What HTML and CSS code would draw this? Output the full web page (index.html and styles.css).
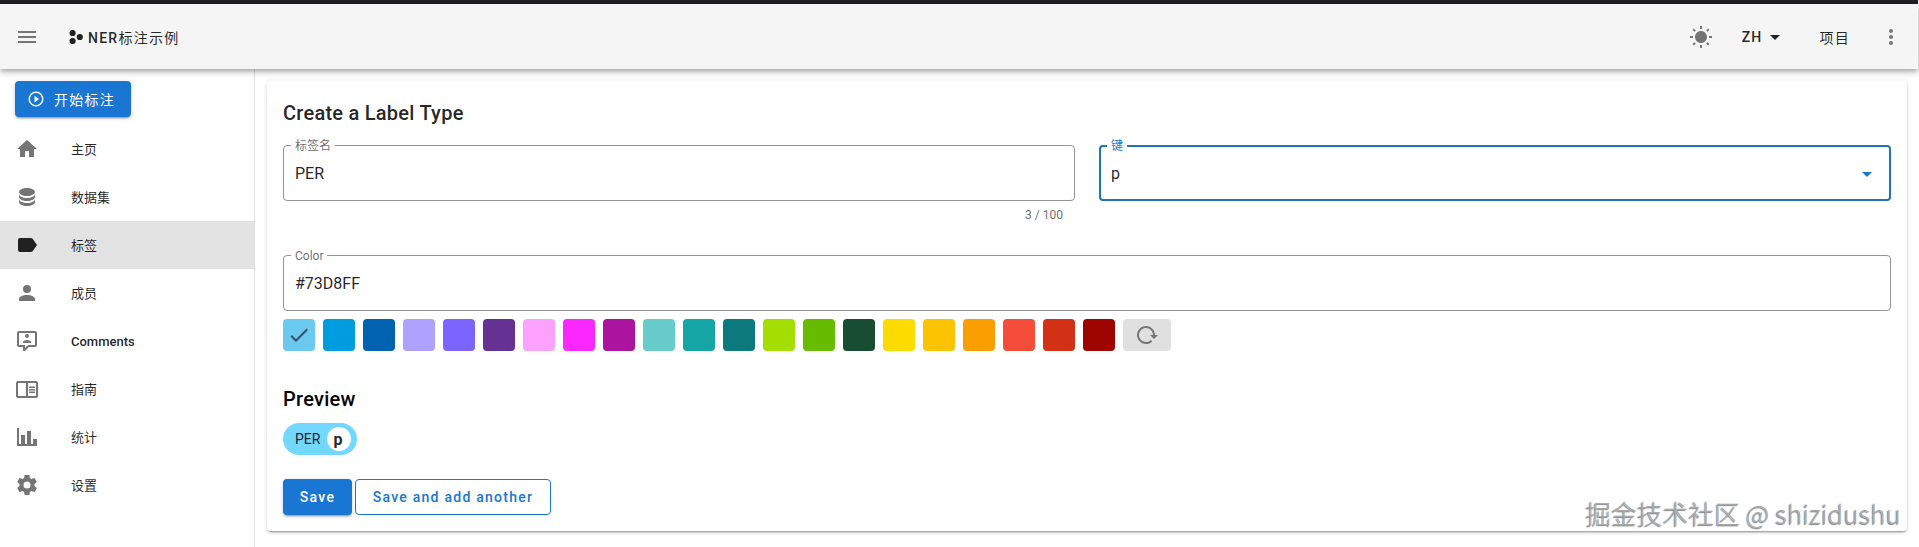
FILE: index.html
```html
<!DOCTYPE html>
<html lang="zh">
<head>
<meta charset="utf-8">
<title>NER标注示例</title>
<link rel="stylesheet" href="styles.css">
</head>
<body>
<div class="app">
  <div class="topstrip"></div>
  <header class="appbar">
    <svg class="icon" viewBox="0 0 24 24"><path d="M3,6H21V8H3V6M3,11H21V13H3V11M3,16H21V18H3V16Z"/></svg>
    <svg class="logo" viewBox="0 0 14 14"><circle cx="3.6" cy="3" r="3.1"/><circle cx="3.6" cy="11" r="3.1"/><circle cx="10.8" cy="7" r="3.1"/></svg>
    <span class="btn-text brand">NER<span class="cjk">标注示例</span></span>
    <svg class="icon sun" viewBox="0 0 24 24"><path d="M3.55 19.09L4.96 20.5L6.76 18.71L5.34 17.29M12 6C8.69 6 6 8.69 6 12S8.69 18 12 18 18 15.31 18 12C18 8.68 15.31 6 12 6M20 13H23V11H20M17.24 18.71L19.04 20.5L20.45 19.09L18.66 17.29M20.45 5L19.04 3.6L17.24 5.39L18.66 6.81M13 1H11V4H13M6.76 5.39L4.96 3.6L3.55 5L5.34 6.81L6.76 5.39M1 13H4V11H1M13 20H11V23H13Z"/></svg>
    <span class="btn-text lang">ZH</span>
    <svg class="icon dark" viewBox="0 0 24 24"><path d="M7,10L12,15L17,10H7Z"/></svg>
    <span class="btn-text projects cjk">项目</span>
    <svg class="icon dots" viewBox="0 0 24 24"><path d="M12,16A2,2 0 0,1 14,18A2,2 0 0,1 12,20A2,2 0 0,1 10,18A2,2 0 0,1 12,16M12,10A2,2 0 0,1 14,12A2,2 0 0,1 12,14A2,2 0 0,1 10,12A2,2 0 0,1 12,10M12,4A2,2 0 0,1 14,6A2,2 0 0,1 12,8A2,2 0 0,1 10,6A2,2 0 0,1 12,4Z"/></svg>
  </header>
  <div class="body">
    <nav class="sidebar">
      <button class="start">
        <svg class="start-icon" viewBox="0 0 24 24"><path d="M10,16.5L16,12L10,7.5V16.5M12,2A10,10 0 0,0 2,12A10,10 0 0,0 12,22A10,10 0 0,0 22,12A10,10 0 0,0 12,2M12,20C7.59,20 4,16.41 4,12C4,7.59 7.59,4 12,4C16.41,4 20,7.59 20,12C20,16.41 16.41,20 12,20Z"/></svg>
        <span class="cjk">开始标注</span>
      </button>
      <ul class="nav">
        <li class="nav-item"><svg class="icon" viewBox="0 0 24 24"><path d="M10,20V14H14V20H19V12H22L12,3L2,12H5V20H10Z"/></svg><span class="nav-cjk">主页</span></li>
        <li class="nav-item"><svg class="icon" viewBox="0 0 24 24"><path d="M12,3C7.58,3 4,4.79 4,7C4,9.21 7.58,11 12,11C16.42,11 20,9.21 20,7C20,4.79 16.42,3 12,3M4,9V12C4,14.21 7.58,16 12,16C16.42,16 20,14.21 20,12V9C20,11.21 16.42,13 12,13C7.58,13 4,11.21 4,9M4,14V17C4,19.21 7.58,21 12,21C16.42,21 20,19.21 20,17V14C20,16.21 16.42,18 12,18C7.58,18 4,16.21 4,14Z"/></svg><span class="nav-cjk">数据集</span></li>
        <li class="nav-item active"><svg class="icon" viewBox="0 0 24 24"><path d="M17.63,5.84C17.27,5.33 16.67,5 16,5H5A2,2 0 0,0 3,7V17A2,2 0 0,0 5,19H16C16.67,19 17.27,18.66 17.63,18.15L22,12L17.63,5.84Z"/></svg><span class="nav-cjk">标签</span></li>
        <li class="nav-item"><svg class="icon" viewBox="0 0 24 24"><path d="M12,4A4,4 0 0,1 16,8A4,4 0 0,1 12,12A4,4 0 0,1 8,8A4,4 0 0,1 12,4M12,14C16.42,14 20,15.79 20,18V20H4V18C4,15.79 7.58,14 12,14Z"/></svg><span class="nav-cjk">成员</span></li>
        <li class="nav-item"><svg class="icon" viewBox="0 0 24 24"><path d="M9,22A1,1 0 0,1 8,21V18H4A2,2 0 0,1 2,16V4C2,2.89 2.9,2 4,2H20A2,2 0 0,1 22,4V16A2,2 0 0,1 20,18H13.9L10.2,21.71C10,21.9 9.75,22 9.5,22V22H9M10,16V19.08L13.08,16H20V4H4V16H10M16,14H8V13C8,11.67 10.67,11 12,11C13.33,11 16,11.67 16,13V14M12,5A2,2 0 0,1 14,7A2,2 0 0,1 12,9A2,2 0 0,1 10,7A2,2 0 0,1 12,5Z"/></svg><span>Comments</span></li>
        <li class="nav-item"><svg class="icon" viewBox="0 0 24 24"><path d="M21,4H3A2,2 0 0,0 1,6V19A2,2 0 0,0 3,21H21A2,2 0 0,0 23,19V6A2,2 0 0,0 21,4M3,19V6H11V19H3M21,19H13V6H21V19M14,9.5H20V11H14V9.5M14,12H20V13.5H14V12M14,14.5H20V16H14V14.5Z"/></svg><span class="nav-cjk">指南</span></li>
        <li class="nav-item"><svg class="icon" viewBox="0 0 24 24"><path d="M22,21H2V3H4V19H6V10H10V19H12V6H16V19H18V14H22V21Z"/></svg><span class="nav-cjk">统计</span></li>
        <li class="nav-item"><svg class="icon" viewBox="0 0 24 24"><path d="M12,15.5A3.5,3.5 0 0,1 8.5,12A3.5,3.5 0 0,1 12,8.5A3.5,3.5 0 0,1 15.5,12A3.5,3.5 0 0,1 12,15.5M19.43,12.97C19.47,12.65 19.5,12.33 19.5,12C19.5,11.67 19.47,11.34 19.43,11L21.54,9.37C21.73,9.22 21.78,8.95 21.66,8.73L19.66,5.27C19.54,5.05 19.27,4.96 19.05,5.05L16.56,6.05C16.04,5.66 15.5,5.32 14.87,5.07L14.5,2.42C14.46,2.18 14.25,2 14,2H10C9.75,2 9.54,2.18 9.5,2.42L9.13,5.07C8.5,5.32 7.96,5.66 7.44,6.05L4.95,5.05C4.73,4.96 4.46,5.05 4.34,5.27L2.34,8.73C2.21,8.95 2.27,9.22 2.46,9.37L4.57,11C4.53,11.34 4.5,11.67 4.5,12C4.5,12.33 4.53,12.65 4.57,12.97L2.46,14.63C2.27,14.78 2.21,15.05 2.34,15.27L4.34,18.73C4.46,18.95 4.73,19.03 4.95,18.95L7.44,17.94C7.96,18.34 8.5,18.68 9.13,18.93L9.5,21.58C9.54,21.82 9.75,22 10,22H14C14.25,22 14.46,21.82 14.5,21.58L14.87,18.93C15.5,18.67 16.04,18.34 16.56,17.94L19.05,18.95C19.27,19.03 19.54,18.95 19.66,18.73L21.66,15.27C21.78,15.05 21.73,14.78 21.54,14.63L19.43,12.97Z"/></svg><span class="nav-cjk">设置</span></li>
      </ul>
    </nav>
    <main class="main">
      <section class="card">
        <h2 class="title">Create a Label Type</h2>
        <div class="row">
          <div class="col">
            <div class="field">
              <span class="field-label">标签名</span>
              <span class="field-value">PER</span>
            </div>
            <div class="counter">3 / 100</div>
          </div>
          <div class="col">
            <div class="field focused">
              <span class="field-label">键</span>
              <span class="field-value">p</span>
              <svg class="icon caret" viewBox="0 0 24 24"><path d="M7,10L12,15L17,10H7Z"/></svg>
            </div>
          </div>
        </div>
        <div class="field">
          <span class="field-label">Color</span>
          <span class="field-value">#73D8FF</span>
        </div>
        <div class="swatches">
          <span class="swatch selected"><svg class="icon check" viewBox="0 0 24 24"><path d="M21,7L9,19L3.5,13.5L4.91,12.09L9,16.17L19.59,5.59L21,7Z"/></svg></span>
          <span class="swatch c1"></span><span class="swatch c2"></span><span class="swatch c3"></span><span class="swatch c4"></span>
          <span class="swatch c5"></span><span class="swatch c6"></span><span class="swatch c7"></span><span class="swatch c8"></span>
          <span class="swatch c9"></span><span class="swatch c10"></span><span class="swatch c11"></span><span class="swatch c12"></span>
          <span class="swatch c13"></span><span class="swatch c14"></span><span class="swatch c15"></span><span class="swatch c16"></span>
          <span class="swatch c17"></span><span class="swatch c18"></span><span class="swatch c19"></span><span class="swatch c20"></span>
          <button class="reload"><svg class="icon" viewBox="0 0 24 24"><path d="M2 12C2 16.97 6.03 21 11 21C13.39 21 15.68 20.06 17.4 18.4L15.9 16.9C14.63 18.25 12.86 19 11 19C4.76 19 1.64 11.46 6.05 7.05C10.46 2.64 18 5.77 18 12H15L19 16H19.1L23 12H20C20 7.03 15.97 3 11 3C6.03 3 2 7.03 2 12Z"/></svg></button>
        </div>
        <h2 class="title preview-title">Preview</h2>
        <div class="chip">PER<span class="chip-key">p</span></div>
        <div class="actions">
          <button class="btn primary">Save</button>
          <button class="btn outlined">Save and add another</button>
        </div>
      </section>
    </main>
  </div>
  <div class="watermark">掘金技术社区 @ shizidushu</div>
</div>
</body>
</html>
```
FILE: styles.css
```css
* { box-sizing: border-box; }
html, body { margin: 0; height: 100%; overflow: hidden; background: #fff; }
body { font-family: Roboto, "Noto Sans CJK SC", sans-serif; color: rgba(0,0,0,.87); }
.app { position: relative; height: 547px; display: flex; flex-direction: column; }
.topstrip { height: 4px; background: #202124; margin-right: 1px; flex: none; }
.appbar {
  height: 65px; flex: none; margin-right: 1px; padding: 1px 0 0 15px;
  display: flex; align-items: center; background: #f5f5f5;
  box-shadow: 0 2px 4px -1px rgba(0,0,0,.2), 0 4px 5px 0 rgba(0,0,0,.14), 0 1px 10px 0 rgba(0,0,0,.12);
  position: relative; z-index: 2;
}
.icon { width: 24px; height: 24px; flex: none; display: block; fill: #757575; }
.icon.dark { fill: #212121; }
.logo { width: 14px; height: 14px; margin-left: 30px; fill: #212121; flex: none; }
.btn-text { font-size: 14px; font-weight: 500; letter-spacing: 1.25px; white-space: nowrap; }
.cjk { font-weight: 400; }
.brand { margin-left: 5px; }
.sun { margin-left: auto; }
.lang { margin-left: 29px; }
.projects { margin-left: 33px; }
.dots { margin-left: 29px; margin-right: 15px; }
.body { flex: 1; display: flex; min-height: 0; }
.sidebar { width: 255px; flex: none; border-right: 1px solid #e0e0e0; padding-top: 12px; }
.start {
  width: 116px; height: 36px; margin-left: 15px; padding: 0 0 0 12px; border: 0; border-radius: 4px;
  display: flex; align-items: center; background: #1976d2; color: #fff;
  font: 500 14px Roboto, "Noto Sans CJK SC", sans-serif; letter-spacing: 1.25px;
  box-shadow: 0 3px 1px -2px rgba(0,0,0,.2), 0 2px 2px 0 rgba(0,0,0,.14), 0 1px 5px 0 rgba(0,0,0,.12);
}
.start-icon { width: 18px; height: 18px; margin-right: 9px; fill: #fff; flex: none; }
.nav { list-style: none; margin: 8px 0 0; padding: 0; }
.nav-item { height: 48px; padding-left: 15px; display: flex; align-items: center; gap: 32px; font-size: 13px; font-weight: 500; }
.nav-cjk { font-weight: 400; margin-bottom: 2px; }
.nav-item.active { background: #e3e3e3; }
.nav-item.active .icon { fill: #212121; }
.main { flex: 1; min-width: 0; padding: 12px 12px 0; }
.card {
  height: 450px; padding: 16px; background: #fff; border-radius: 4px;
  box-shadow: 0 3px 1px -2px rgba(0,0,0,.2), 0 2px 2px 0 rgba(0,0,0,.14), 0 1px 5px 0 rgba(0,0,0,.12);
}
.title { margin: 0; font-size: 20px; font-weight: 500; line-height: 32px; letter-spacing: .25px; }
.row { display: flex; gap: 24px; margin-top: 16px; height: 110px; }
.col { flex: 1; min-width: 0; }
.field {
  position: relative; height: 56px; padding: 0 11px; display: flex; align-items: center;
  border: 1px solid rgba(0,0,0,.42); border-radius: 4px;
}
.field.focused { border: 2px solid #2073b6; padding: 0 10px; }
.field-label {
  position: absolute; left: 7px; top: -7px; padding: 0 4px; background: #fff;
  font-size: 12px; line-height: 14px; color: rgba(0,0,0,.6);
}
.focused .field-label { left: 6px; top: -8px; color: #1976d2; }
.field-value { font-size: 16px; }
.caret { position: absolute; right: 10px; top: 15px; fill: #1976d2; }
.counter { margin: 7px 12px 0 0; text-align: right; font-size: 12px; line-height: 15px; color: rgba(0,0,0,.6); }
.swatches { display: flex; gap: 8px; margin-top: 8px; }
.swatch { width: 32px; height: 32px; border-radius: 4px; flex: none; display: flex; align-items: center; justify-content: center; }
.swatch.selected { background: #6bc9ef; }
.check { fill: #34506a; }
.c1 { background: #009ce0; } .c2 { background: #0062b1; } .c3 { background: #aea1ff; } .c4 { background: #7b64ff; }
.c5 { background: #653294; } .c6 { background: #fda1ff; } .c7 { background: #fa28ff; } .c8 { background: #ab149e; }
.c9 { background: #68ccca; } .c10 { background: #16a5a5; } .c11 { background: #0c797d; } .c12 { background: #a4dd00; }
.c13 { background: #68bc00; } .c14 { background: #194d33; } .c15 { background: #fcdc00; } .c16 { background: #fcc400; }
.c17 { background: #fb9e00; } .c18 { background: #f44e3b; } .c19 { background: #d33115; } .c20 { background: #9f0500; }
.reload { width: 48px; height: 32px; padding: 0; border: 0; border-radius: 4px; background: #e0e0e0; display: flex; align-items: center; justify-content: center; }
.preview-title { margin-top: 32px; color: #000; }
.chip {
  width: 74px; height: 32px; margin-top: 8px; padding: 0 6px 0 12px; border-radius: 16px;
  display: flex; align-items: center; justify-content: space-between;
  background: #73d8ff; font-size: 14px;
}
.chip-key { width: 24px; height: 24px; padding-right: 2px; border-radius: 50%; background: #fff; display: flex; align-items: center; justify-content: center; font-weight: 700; font-size: 16px; }
.actions { display: flex; gap: 3px; margin-top: 24px; }
.btn { height: 36px; border-radius: 4px; font: 500 14px Roboto, sans-serif; letter-spacing: 1.25px; }
.primary { width: 69px; border: 0; background: #1976d2; color: #fff; box-shadow: 0 3px 1px -2px rgba(0,0,0,.2), 0 2px 2px 0 rgba(0,0,0,.14), 0 1px 5px 0 rgba(0,0,0,.12); }
.outlined { width: 196px; border: 1px solid #1976d2; background: #fff; color: #1976d2; }
.watermark {
  position: absolute; right: 18px; top: 495px; font-family: "Noto Sans CJK SC", sans-serif;
  font-size: 25.6px; font-weight: 300; line-height: 36px; letter-spacing: .2px; white-space: nowrap; color: #aaa;
  text-shadow: -1px 1px 1px rgba(0,0,0,.5); z-index: 3;
}
```
